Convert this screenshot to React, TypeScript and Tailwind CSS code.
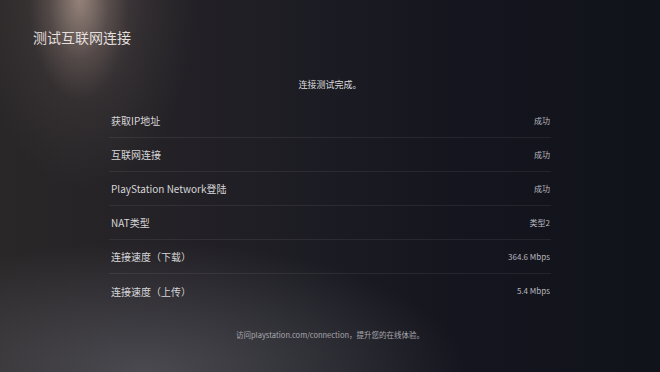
const rows: { label: string; value: string }[] = [
  { label: "获取IP地址", value: "成功" },
  { label: "互联网连接", value: "成功" },
  { label: "PlayStation Network登陆", value: "成功" },
  { label: "NAT类型", value: "类型2" },
  { label: "连接速度（下载）", value: "364.6 Mbps" },
  { label: "连接速度（上传）", value: "5.4 Mbps" },
];

export default function App() {
  return (
    <div
      className="relative w-[660px] h-[372px] overflow-hidden flex flex-col bg-[radial-gradient(ellipse_50px_100px_at_12%_0%,rgba(205,180,165,0.55)_0%,rgba(160,140,130,0.2)_60%,transparent_100%),radial-gradient(ellipse_110px_190px_at_13%_0%,rgba(130,110,105,0.45)_0%,rgba(100,88,86,0.2)_55%,transparent_100%),radial-gradient(ellipse_320px_130px_at_22%_100%,rgba(95,95,102,0.65)_0%,transparent_100%),linear-gradient(90deg,#2a2728_0%,#1f1e25_40%,#14151e_70%,#11131b_100%)]"
      style={{ fontFamily: '"Noto Sans CJK SC", "Noto Sans", sans-serif' }}
    >
      {/* header */}
      <h1 className="pl-[33px] pt-[27px] text-[14px] leading-[20px] text-[#e2dfdd] font-normal">
        测试互联网连接
      </h1>

      <p className="mt-[32px] text-center text-[9px] leading-[12px] text-[#dcdcdf]">
        连接测试完成。
      </p>

      {/* results */}
      <div className="mt-[13px] w-[442px] mx-auto flex flex-col">
        {rows.map((row, idx) => (
          <div
            key={row.label}
            className={`h-[34px] flex items-center justify-between pl-[2px] pr-[1px] ${
              idx < rows.length - 1 ? "border-b border-white/[0.07]" : ""
            }`}
          >
            <span className="text-[10px] text-[#d6d5d8]">{row.label}</span>
            <span className="text-[8px] text-[#b9b9bf]">{row.value}</span>
          </div>
        ))}
      </div>

      <p className="mt-[22px] text-center text-[7.5px] leading-[10px] text-[#a9a9ae]">
        访问playstation.com/connection，提升您的在线体验。
      </p>
    </div>
  );
}
